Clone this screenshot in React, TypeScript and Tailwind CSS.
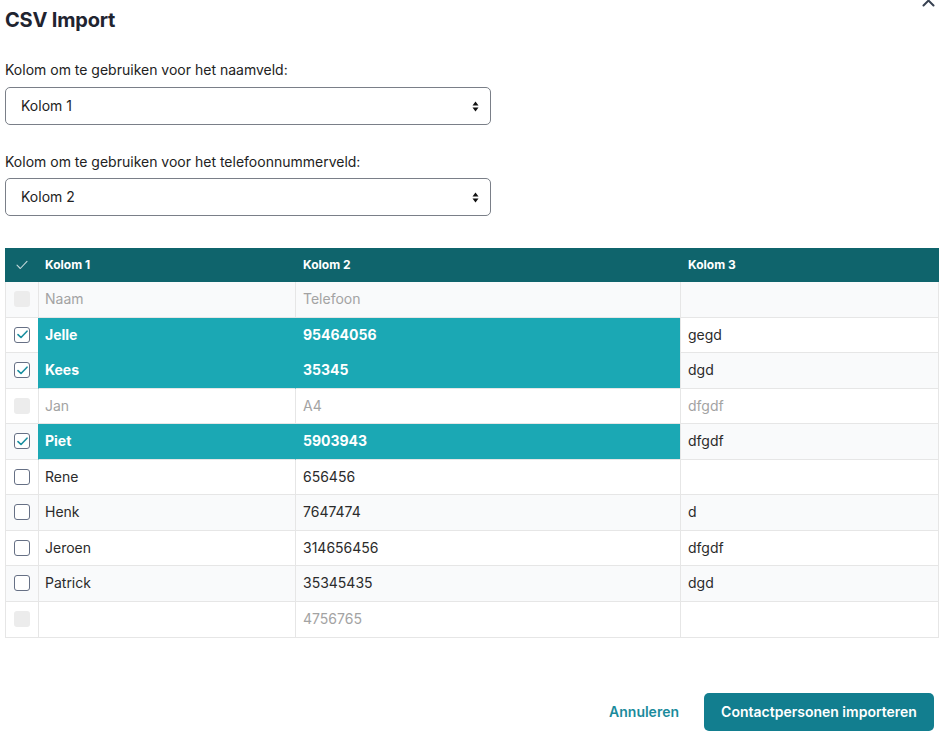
import React from "react";

type Row = {
  name: string;
  phone: string;
  extra: string;
  state: "disabled" | "checked" | "unchecked";
};

const rows: Row[] = [
  { name: "Naam", phone: "Telefoon", extra: "", state: "disabled" },
  { name: "Jelle", phone: "95464056", extra: "gegd", state: "checked" },
  { name: "Kees", phone: "35345", extra: "dgd", state: "checked" },
  { name: "Jan", phone: "A4", extra: "dfgdf", state: "disabled" },
  { name: "Piet", phone: "5903943", extra: "dfgdf", state: "checked" },
  { name: "Rene", phone: "656456", extra: "", state: "unchecked" },
  { name: "Henk", phone: "7647474", extra: "d", state: "unchecked" },
  { name: "Jeroen", phone: "314656456", extra: "dfgdf", state: "unchecked" },
  { name: "Patrick", phone: "35345435", extra: "dgd", state: "unchecked" },
  { name: "", phone: "4756765", extra: "", state: "disabled" },
];

const SelectArrows = () => (
  <svg width="7" height="11" viewBox="0 0 7 11" className="shrink-0">
    <path d="M3.5 0.5 L6.5 4.5 H0.5 Z" fill="#111" />
    <path d="M3.5 10.5 L6.5 6.5 H0.5 Z" fill="#111" />
  </svg>
);

const Select = ({ value }: { value: string }) => (
  <div className="flex items-center justify-between w-[486px] h-[38px] rounded-[5px] border border-[#7a7f88] bg-white pl-[15px] pr-[11px] text-sm text-[#222]">
    <span>{value}</span>
    <SelectArrows />
  </div>
);

const CheckBox = ({ state }: { state: Row["state"] }) => {
  if (state === "disabled") {
    return <div className="w-4 h-4 rounded-[3px] bg-[#ececec]" />;
  }
  return (
    <div className="w-4 h-4 rounded-[3px] border-[1.5px] border-[#667085] bg-white flex items-center justify-center">
      {state === "checked" && (
        <svg width="11" height="9" viewBox="0 0 11 9" fill="none">
          <path
            d="M1 4.6 L4 7.5 L10 1.2"
            stroke="#1a8fa0"
            strokeWidth="1.6"
            strokeLinecap="round"
            strokeLinejoin="round"
          />
        </svg>
      )}
    </div>
  );
};

export default function App() {
  return (
    <div
      className="relative w-[945px] h-[745px] bg-white overflow-hidden px-[5px] text-[#2b2b2b]"
      style={{ fontFamily: "Inter, 'Noto Sans', sans-serif" }}
    >
      {/* close button, partly scrolled out of view */}
      <button className="absolute left-[922px] top-[-6px]">
        <svg width="13" height="13" viewBox="0 0 13 13" fill="none">
          <path
            d="M1.5 1.5 L11.5 11.5 M11.5 1.5 L1.5 11.5"
            stroke="#374151"
            strokeWidth="2"
            strokeLinecap="round"
          />
        </svg>
      </button>

      <h1 className="pt-[6px] text-xl leading-7 font-bold text-[#1f2430] tracking-[-0.2px]">
        CSV Import
      </h1>

      <div className="mt-[26px]">
        <label className="block text-sm leading-5 text-[#222]">
          Kolom om te gebruiken voor het naamveld:
        </label>
        <div className="mt-[7px]">
          <Select value="Kolom 1" />
        </div>
      </div>

      <div className="mt-[27px]">
        <label className="block text-sm leading-5 text-[#222]">
          Kolom om te gebruiken voor het telefoonnummerveld:
        </label>
        <div className="mt-[6px]">
          <Select value="Kolom 2" />
        </div>
      </div>

      <div className="mt-8 w-[934px] border-x border-b border-[#e6e6e6]">
        <div className="flex h-[34px] bg-[#0f646c] text-white text-xs font-bold -mx-px">
          <div className="w-[33px] flex items-center justify-center">
            <svg width="12" height="10" viewBox="0 0 12 10" fill="none">
              <path
                d="M1 5.2 L4.3 8.5 L11 1.3"
                stroke="rgba(255,255,255,0.75)"
                strokeWidth="1.1"
                strokeLinecap="round"
                strokeLinejoin="round"
              />
            </svg>
          </div>
          <div className="w-[257px] flex items-center px-[7px]">Kolom 1</div>
          <div className="w-[385px] flex items-center px-[8px]">Kolom 2</div>
          <div className="flex-1 flex items-center px-[8px]">Kolom 3</div>
        </div>

        {rows.map((row, i) => {
          const stripe = i % 2 === 0 ? "bg-[#f9fafb]" : "bg-white";
          const checked = row.state === "checked";
          const disabled = row.state === "disabled";
          const isLast = i === rows.length - 1;
          const nextChecked = !isLast && rows[i + 1].state === "checked";
          const dataCell = checked
            ? `bg-[#1ba8b4] text-white font-bold border-l-[#1ba8b4] ${
                nextChecked ? "border-b-[#1ba8b4]" : "border-b-[#e6e6e6]"
              }`
            : `${stripe} ${disabled ? "text-[#a3a3a3]" : "text-[#2b2b2b]"} border-l-[#e6e6e6] border-b-[#e6e6e6]`;
          const bottom = isLast ? "border-b-0" : "border-b";
          return (
            <div key={i} className="flex h-[35.5px] text-sm">
              <div
                className={`w-[32px] flex items-center justify-center ${bottom} border-[#e6e6e6] ${stripe}`}
              >
                <CheckBox state={row.state} />
              </div>
              <div className={`w-[257px] flex items-center px-[6px] border-l ${bottom} ${dataCell}`}>
                {row.name}
              </div>
              <div className={`w-[385px] flex items-center px-[7px] border-l ${bottom} ${dataCell}`}>
                {row.phone}
              </div>
              <div
                className={`flex-1 flex items-center px-[7px] border-l ${bottom} border-[#e6e6e6] ${stripe} ${
                  disabled ? "text-[#a3a3a3]" : "text-[#2b2b2b]"
                }`}
              >
                {row.extra}
              </div>
            </div>
          );
        })}
      </div>

      <div className="mt-[55px] w-[929px] flex items-center justify-end gap-[25px]">
        <button className="text-sm font-semibold text-[#1b8b9c]">Annuleren</button>
        <button className="h-[38px] w-[230px] rounded-[5px] bg-[#127e8f] text-white text-sm font-semibold">
          Contactpersonen importeren
        </button>
      </div>
    </div>
  );
}
